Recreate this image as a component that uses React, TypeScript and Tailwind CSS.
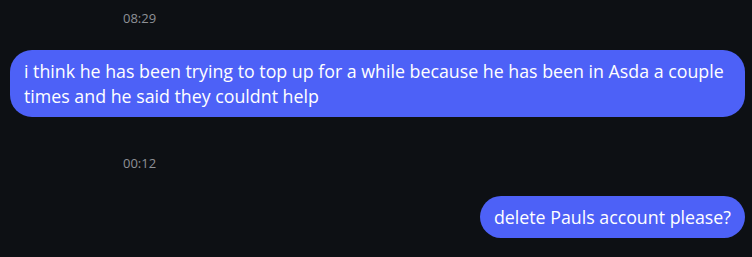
import React from "react";

const Stamp: React.FC<{ time: string }> = ({ time }) => (
  <div className="pl-[113px] text-[13px] leading-[16px] text-[#8e9197]">{time}</div>
);

const Bubble: React.FC<{ text: string; right?: boolean }> = ({ text, right }) => (
  <div className={right ? "flex justify-end" : "flex"}>
    <div className="rounded-[22px] bg-[#4d61f7] px-[14px] pt-[9px] pb-[8px] text-[17.8px] leading-[25px] text-white">
      {text}
    </div>
  </div>
);

export default function App() {
  return (
    <div
      className="h-[257px] w-[752px] overflow-hidden bg-[#0d1014] pl-[10px] pr-[7px] pt-[10px]"
      style={{ fontFamily: '"Open Sans", "Noto Sans", sans-serif' }}
    >
      <Stamp time="08:29" />
      <div className="mt-[24px]">
        <Bubble text="i think he has been trying to top up for a while because he has been in Asda a couple times and he said they couldnt help" />
      </div>
      <div className="mt-[38px]">
        <Stamp time="00:12" />
      </div>
      <div className="mt-[25px]">
        <Bubble right text="delete Pauls account please?" />
      </div>
    </div>
  );
}
